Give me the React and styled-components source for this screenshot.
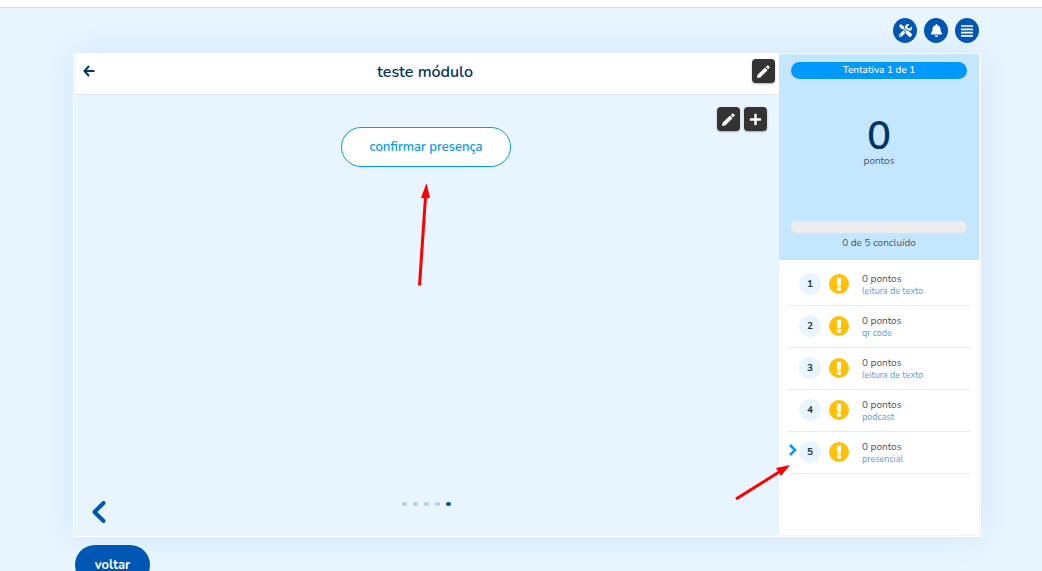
import React from "react";
import styled, { createGlobalStyle } from "styled-components";
import { FaTools, FaBell, FaPlus } from "react-icons/fa";

const color = {
  page: "#e8f5ff",
  navy: "#003366",
  blue: "#0056b3",
  sky: "#0099ff",
  pale: "#c5e6ff",
  amber: "#ffc107",
  dark: "#333333",
  line: "#ebebeb",
  text: "#4a5568",
  link: "#5a9cf8",
};

const GlobalStyle = createGlobalStyle`
  *, *::before, *::after { box-sizing: border-box; }
  html, body { margin: 0; background: ${color.page}; }
  body { font-family: Nunito, Lato, sans-serif; overflow: hidden; color: ${color.text}; }
  button { font-family: inherit; padding: 0; border: 0; cursor: pointer; }
  h1, p, ol { margin: 0; padding: 0; }
  svg { display: block; }
`;

const TopStrip = styled.div`
  height: 8px;
  background: #fff;
  border-bottom: 1px solid #d3dde6;
`;

const Page = styled.div`
  padding: 10px 61px 0 73px;
`;

const Tools = styled.nav`
  display: flex;
  justify-content: flex-end;
  gap: 7px;
  padding-right: 2px;
  margin-bottom: 10px;
`;

const RoundButton = styled.button`
  width: 24px;
  height: 25px;
  display: grid;
  place-items: center;
  border-radius: 50%;
  background: ${color.blue};
  color: #fff;
  font-size: 13px;
`;

const Card = styled.section`
  display: flex;
  min-height: 484px;
  border: 1px solid #fff;
  padding: 0 1px 1px;
  background: ${color.page};
  box-shadow: 0 0 30px rgba(0, 86, 179, 0.1);
`;

const Main = styled.main`
  flex: 1;
  display: flex;
  flex-direction: column;
`;

const Header = styled.header`
  display: grid;
  grid-template-columns: 28px 1fr 36px;
  align-items: center;
  height: 41px;
  padding: 0 4px 6px 8px;
  background: #fff;
  border-bottom: 1px solid #e3e9ee;
`;

const Title = styled.h1`
  font-size: 16px;
  line-height: 24px;
  padding-top: 2px;
  font-weight: 600;
  text-align: center;
  color: ${color.navy};
`;

const GhostButton = styled.button`
  display: grid;
  place-items: center;
  justify-self: start;
  background: none;
  color: ${(p) => p.$color};
`;

const SquareButton = styled.button`
  width: 23px;
  height: 24px;
  display: grid;
  place-items: center;
  justify-self: end;
  border-radius: 4px;
  background: ${color.dark};
  color: #fff;
  font-size: 13px;
  box-shadow: 0 1px 2px rgba(0, 0, 0, 0.3);
`;

const Stage = styled.div`
  flex: 1;
  display: flex;
  flex-direction: column;
  padding: 12px 12px 12px 10px;
`;

const EditBar = styled.div`
  display: flex;
  justify-content: flex-end;
  gap: 4px;
`;

const Confirm = styled.div`
  position: relative;
  align-self: center;
  margin-top: -4px;
`;

const OutlineButton = styled.button`
  height: 40px;
  padding: 0 28px;
  && { border: 1px solid ${color.sky}; }
  border-radius: 20px;
  background: #fff;
  color: ${color.sky};
  font-size: 13px;
  font-weight: 600;
`;

const Pager = styled.div`
  display: grid;
  grid-template-columns: 24px 1fr 24px;
  align-items: center;
  margin-top: auto;
  padding: 0 7px;
`;

const Dots = styled.div`
  display: flex;
  justify-content: center;
  gap: 6px;
  padding-bottom: 16px;
`;

const Dot = styled.span`
  width: 5px;
  height: 4px;
  border-radius: 2px;
  background: ${(p) => (p.$active ? color.blue : "#b0cfec")};
`;

const Sidebar = styled.aside`
  width: 200px;
  flex: none;
  background: #fff;
`;

const Score = styled.div`
  display: flex;
  flex-direction: column;
  height: 206px;
  padding: 8px 12px 9px;
  background: ${color.pale};
  text-align: center;
  font-size: 10px;
  line-height: 16px;
`;

const Attempt = styled.p`
  line-height: 17px;
  border-radius: 9px;
  background: ${color.sky};
  color: #fff;
  font-weight: 500;
`;

const Points = styled.strong`
  margin-top: 40px;
  font-size: 40px;
  line-height: 34px;
  font-weight: 600;
  color: ${color.navy};
`;

const Progress = styled.div`
  height: 12px;
  margin: auto 0 2px;
  border-radius: 6px;
  background: #ededed;
`;

const Steps = styled.ol`
  padding: 4px 8px;
  list-style: none;
`;

const Step = styled.li`
  position: relative;
  display: flex;
  align-items: center;
  height: 42px;
  padding-bottom: 1px;
  border-bottom: 1px solid ${color.line};
`;

const Marker = styled.span`
  width: 12px;
  padding: 0 0 4px 2px;
  color: ${color.sky};
`;

const Number = styled.span`
  width: 22px;
  height: 22px;
  margin-right: 8px;
  border-radius: 50%;
  background: ${color.page};
  color: #1c3550;
  font-size: 10px;
  line-height: 23px;
  font-weight: 700;
  text-align: center;
`;

const StepText = styled.div`
  margin-left: 13px;
  padding-top: 1px;
  font-size: 10px;
  line-height: 12px;
`;

const Kind = styled.a`
  display: block;
  font-size: 9px;
  line-height: 12px;
  color: ${color.link};
  text-decoration: none;
`;

const BackButton = styled.button`
  width: 75px;
  height: 40px;
  margin: 8px 2px 0;
  border-radius: 20px;
  background: ${color.blue};
  color: #fff;
  font-size: 13px;
  font-weight: 700;
`;

const UpArrow = styled.svg`
  position: absolute;
  top: 56px;
  left: 50%;
  margin-left: -10px;
`;

const SideArrow = styled.svg`
  position: absolute;
  top: 31px;
  left: -54px;
`;

const steps = ["leitura de texto", "qr code", "leitura de texto", "podcast", "presencial"];

function Warning() {
  return (
    <svg width="20" height="20" viewBox="0 0 20 20" role="img" aria-label="pendente">
      <circle cx="10" cy="10" r="10" fill={color.amber} />
      <path d="M7.800 3.800h4.400L11.800 12H8.200z" fill="#fff" />
      <circle cx="10" cy="14.700" r="2.200" fill="#fff" />
    </svg>
  );
}

function Pencil() {
  return (
    <svg width="13" height="13" viewBox="0 0 13 13" fill="currentColor" stroke="currentColor" strokeWidth="0.800" strokeLinejoin="round" aria-hidden="true">
      <path d="M.5 12.500 1 9.700 8 3l2.200 2.200L3.300 12z" />
      <path d="M9.200 1.900 10.200 1q.7-.5 1.300.1l.5.500q.6.700 0 1.400l-.800.900z" />
    </svg>
  );
}

function BackArrow() {
  return (
    <svg width="12" height="12" viewBox="0 0 12 12" fill="none" stroke="currentColor" strokeWidth="2" aria-hidden="true">
      <path d="M11.500 6H1.500M6 1 1.500 6 6 11" />
    </svg>
  );
}

function Lines() {
  return (
    <svg width="12" height="12" viewBox="0 0 12 12" fill="none" stroke="currentColor" strokeWidth="1.700" aria-hidden="true">
      <path d="M0 1h12M0 4.300h12M0 7.600h12M0 10.900h12" />
    </svg>
  );
}

export default function App() {
  return (
    <>
      <GlobalStyle />
      <TopStrip />
      <Page>
        <Tools>
          <RoundButton aria-label="ferramentas"><FaTools /></RoundButton>
          <RoundButton aria-label="notificações"><FaBell /></RoundButton>
          <RoundButton aria-label="menu"><Lines /></RoundButton>
        </Tools>
        <Card>
          <Main>
            <Header>
              <GhostButton aria-label="voltar ao início" $color={color.navy}><BackArrow /></GhostButton>
              <Title>teste módulo</Title>
              <SquareButton aria-label="editar módulo"><Pencil /></SquareButton>
            </Header>
            <Stage>
              <EditBar>
                <SquareButton aria-label="editar"><Pencil /></SquareButton>
                <SquareButton aria-label="adicionar"><FaPlus /></SquareButton>
              </EditBar>
              <Confirm>
                <OutlineButton>confirmar presença</OutlineButton>
                <UpArrow width="16" height="104" viewBox="0 0 16 104" aria-hidden="true">
                  <path d="M3.500 102.500 9.500 14" stroke="#f00" strokeWidth="3" fill="none" />
                  <path d="M10.500 0 14 15H5z" fill="#f00" />
                </UpArrow>
              </Confirm>
              <Pager>
                <GhostButton aria-label="anterior" $color={color.blue}>
                  <svg width="14" height="22" viewBox="0 0 14 22" fill="none" stroke="currentColor" strokeWidth="4" strokeLinecap="round" strokeLinejoin="round">
                    <path d="M11.500 2 2.500 11l9 9" />
                  </svg>
                </GhostButton>
                <Dots>
                  {steps.map((_, i) => <Dot key={i} $active={i === 4} />)}
                </Dots>
              </Pager>
            </Stage>
          </Main>
          <Sidebar>
            <Score>
              <Attempt>Tentativa 1 de 1</Attempt>
              <Points>0</Points>
              <p>pontos</p>
              <Progress role="progressbar" aria-label="progresso" aria-valuenow={0} aria-valuemax={5} />
              <p>0 de 5 concluído</p>
            </Score>
            <Steps>
              {steps.map((kind, i) => (
                <Step key={i}>
                  <Marker>
                    {i === 4 && (
                      <svg width="8" height="12" viewBox="0 0 8 12" fill="none" stroke="currentColor" strokeWidth="2.500" aria-hidden="true">
                        <path d="M1 1l5 5-5 5" />
                      </svg>
                    )}
                  </Marker>
                  <Number>{i + 1}</Number>
                  <Warning />
                  <StepText>
                    0 pontos
                    <Kind href="#">{kind}</Kind>
                  </StepText>
                  {i === 4 && (
                    <SideArrow width="60" height="38" viewBox="0 0 60 38" aria-hidden="true">
                      <path d="M3 36 46 9" stroke="#f00" strokeWidth="3" fill="none" />
                      <path d="M57 2 48 13 43 5z" fill="#f00" />
                    </SideArrow>
                  )}
                </Step>
              ))}
            </Steps>
          </Sidebar>
        </Card>
        <BackButton>voltar</BackButton>
      </Page>
    </>
  );
}
